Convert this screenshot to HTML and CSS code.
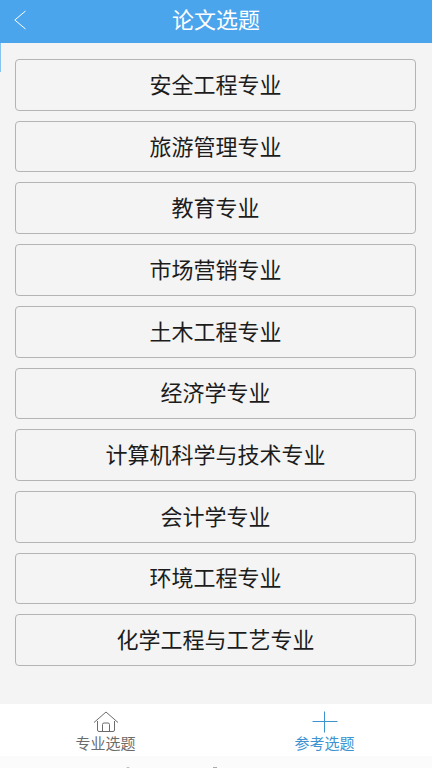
FILE: index.html
```html
<!DOCTYPE html>
<html lang="zh-CN">
<head>
<meta charset="utf-8">
<meta name="viewport" content="width=device-width, initial-scale=1">
<title>论文选题</title>
<link rel="stylesheet" href="styles.css">
</head>
<body>
<header class="topbar">
  <button class="back" type="button" aria-label="返回">
    <svg width="12" height="20" viewBox="0 0 12 20" fill="none" stroke="currentColor" stroke-width="1"><path d="M11.5 1 0.8 10l10.7 9"/></svg>
  </button>
  <h1 class="title">论文选题</h1>
</header>
<main class="majors">
  <button class="major" type="button">安全工程专业</button>
  <button class="major" type="button">旅游管理专业</button>
  <button class="major" type="button">教育专业</button>
  <button class="major" type="button">市场营销专业</button>
  <button class="major" type="button">土木工程专业</button>
  <button class="major" type="button">经济学专业</button>
  <button class="major" type="button">计算机科学与技术专业</button>
  <button class="major" type="button">会计学专业</button>
  <button class="major" type="button">环境工程专业</button>
  <button class="major" type="button">化学工程与工艺专业</button>
</main>
<nav class="tabs">
  <a class="tab" href="#majors">
    <svg width="26" height="22" viewBox="0 0 26 22" fill="none" stroke="currentColor" stroke-width="1"><path d="M1 11.5 13 1 25 11.5M4.5 10v9q0 1.500 1.500 1.500h14q1.500 0 1.500-1.500v-9M9.500 20.500v-7q0-1.500 1.500-1.500h4q1.500 0 1.500 1.500v7"/></svg>
    <span>专业选题</span>
  </a>
  <a class="tab tab-active" href="#reference" aria-current="page">
    <svg width="26" height="22" viewBox="0 0 26 22" fill="none" stroke="currentColor" stroke-width="1"><path d="M0.500 10.500h25M12.500 0.500v21"/></svg>
    <span>参考选题</span>
  </a>
</nav>
<footer class="system-strip">
  <svg width="92" height="1" viewBox="0 0 92 1" fill="#aaa"><path d="M0 1 2 0 4 1ZM87 1V0h4v1Z"/></svg>
</footer>
</body>
</html>
```
FILE: styles.css
```css
* {
  box-sizing: border-box;
}

body {
  margin: 0;
  min-height: 100vh;
  display: flex;
  flex-direction: column;
  background: #f4f4f4;
  color: #1c1c1c;
  font-family: "Noto Sans CJK SC", sans-serif;
}

button {
  font: inherit;
  color: inherit;
  cursor: pointer;
}

.topbar {
  display: grid;
  grid-template-columns: 44px 1fr 44px;
  align-items: center;
  height: 43px;
  padding-bottom: 4px;
  background: #4ba5ed;
  color: #fff;
}

.back {
  display: flex;
  align-items: center;
  height: 36px;
  padding: 0 0 0 14px;
  border: 0;
  background: none;
}

.title {
  margin: 0;
  padding-bottom: 4px;
  font-size: 22px;
  font-weight: 400;
  line-height: 32px;
  text-align: center;
}

.majors {
  position: relative;
  flex: 1;
  display: flex;
  flex-direction: column;
  gap: 10px;
  padding: 16px 16px 38px 15px;
}

.majors::before {
  content: "";
  position: absolute;
  top: 0;
  left: 0;
  width: 1px;
  height: 29px;
  background: #86c3ee;
}

.major {
  flex: 1;
  min-height: 44px;
  padding: 0 0 4px;
  border: 1px solid #b4b4b4;
  border-radius: 4px;
  background: #f4f4f4;
  font-size: 22px;
  line-height: 32px;
}

.tabs {
  display: grid;
  grid-template-columns: 1fr 1fr;
  column-gap: 8px;
  height: 52px;
  padding-right: 2px;
  background: #fff;
}

.tab {
  display: flex;
  flex-direction: column;
  align-items: center;
  padding-top: 7px;
  color: #6c6c6c;
  font-size: 15px;
  line-height: 20px;
  text-decoration: none;
}

.tab-active {
  color: #3d93cf;
}

.system-strip {
  display: flex;
  align-items: flex-end;
  justify-content: center;
  height: 12px;
  padding-right: 88px;
  background: #fbfbfb;
}
```
